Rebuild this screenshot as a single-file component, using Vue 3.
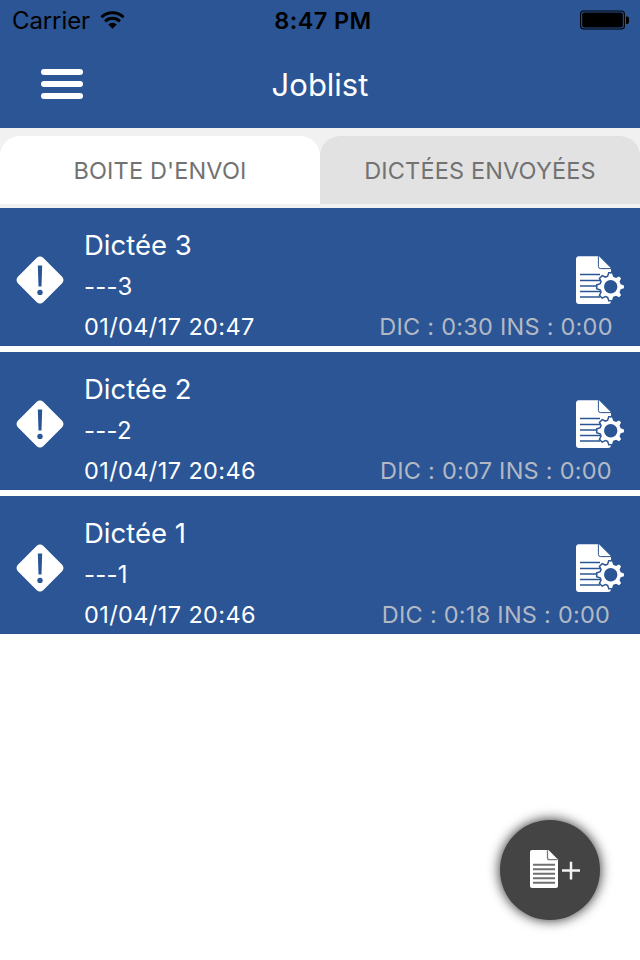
<script setup>
const jobs = [
  { title: 'Dictée 3', sub: '---3', date: '01/04/17 20:47', dic: '0:30', ins: '0:00' },
  { title: 'Dictée 2', sub: '---2', date: '01/04/17 20:46', dic: '0:07', ins: '0:00' },
  { title: 'Dictée 1', sub: '---1', date: '01/04/17 20:46', dic: '0:18', ins: '0:00' }
]

// Eight-toothed gear outline centred on (cx, cy)
function gear(cx, cy, root, tip, rootHalf, tipHalf) {
  const points = []
  for (let i = 0; i < 8; i++) {
    const steps = [[root, -rootHalf], [tip, -tipHalf], [tip, tipHalf], [root, rootHalf]]
    for (const [r, offset] of steps) {
      const a = ((i * 45 + offset) * Math.PI) / 180
      points.push(`${(cx + r * Math.cos(a)).toFixed(2)},${(cy + r * Math.sin(a)).toFixed(2)}`)
    }
  }
  return points.join(' ')
}
const gearPoints = gear(34.7, 30.8, 10.3, 13.3, 14, 6)
</script>

<template>
  <div class="screen">
    <header class="header">
      <div class="status">
        <div class="carrier">
          <span class="carrier-name">Carrier</span>
          <svg class="wifi" width="25" height="20" viewBox="0 0 26 20">
            <g fill="none" stroke="#000" stroke-width="3.1">
              <path d="M1.5 7.1a16.3 16.3 0 0 1 23 0" />
              <path d="M5.3 11.4a11 11 0 0 1 15.4 0" />
            </g>
            <path d="M8.6 14.7a6.3 6.3 0 0 1 8.8 0L13 19z" fill="#000" />
          </svg>
        </div>
        <span class="clock">8:47 PM</span>
        <svg class="battery" width="49" height="20" viewBox="0 0 49 20">
          <rect x=".6" y="1" width="43.8" height="18" rx="3" fill="none" stroke="#000" stroke-width="1.1" />
          <rect x="2.2" y="2.600" width="40.600" height="14.800" rx="1.6" fill="#000" />
          <path d="M46 6.500h1a2 2 0 0 1 2 2v3.400a2 2 0 0 1-2 2h-1z" fill="#000" />
        </svg>
      </div>
      <div class="navbar">
        <button class="menu" aria-label="Menu"><i></i><i></i><i></i></button>
        <h1 class="title">Joblist</h1>
      </div>
    </header>

    <nav class="tabs">
      <div class="tab active">BOITE D'ENVOI</div>
      <div class="tab">DICTÉES ENVOYÉES</div>
    </nav>

    <ul class="jobs">
      <li v-for="job in jobs" :key="job.title" class="job">
        <svg class="warn" width="48" height="48" viewBox="0 0 48 48">
          <rect x="6.100" y="6.100" width="35.800" height="35.800" rx="4.500" transform="rotate(45 24 24)" fill="#fff" />
          <path d="M21.800 9.600h4.400l-.7 20.800h-3z" fill="#2b5595" />
          <circle cx="24" cy="36.400" r="2.700" fill="#2b5595" />
        </svg>
        <div class="info">
          <div class="name">{{ job.title }}</div>
          <div class="sub">{{ job.sub }}</div>
          <div class="foot">
            <span class="date">{{ job.date }}</span>
            <span class="durations">DIC : {{ job.dic }} INS : {{ job.ins }}</span>
          </div>
        </div>
        <svg class="doc" width="50" height="50" viewBox="0 0 50 50">
          <path d="M3 .2H23L35 12.200V45a3 3 0 0 1-3 3H3a3 3 0 0 1-3-3V3.200a3 3 0 0 1 3-3z" fill="#fff" />
          <path d="M22.400.2V10.400a2.200 2.200 0 0 0 2.200 2.200H35" fill="none" stroke="#2b5595" stroke-width="1" />
          <path d="M4 18.500H24M4 24.500H24M4 30H24M4 35.500H24M4 41H24" stroke="#2b5595" stroke-width="1.400" />
          <polygon :points="gearPoints" fill="#2b5595" stroke="#2b5595" stroke-width="3" />
          <polygon :points="gearPoints" fill="#fff" />
          <circle cx="34.700" cy="30.800" r="6.700" fill="#2b5595" />
        </svg>
      </li>
    </ul>

    <button class="fab" aria-label="Nouvelle dictée">
      <svg width="52" height="40" viewBox="0 0 52 40">
        <path d="M2 0H18.500L28 9.500V36a2 2 0 0 1-2 2H2a2 2 0 0 1-2-2V2a2 2 0 0 1 2-2z" fill="#fff" />
        <path d="M17.500.3V7.700a2 2 0 0 0 2 2H27.500" fill="none" stroke="#777" stroke-width="1.300" />
        <path d="M3 14.800H25M3 19.300H25M3 23.800H25M3 28.300H25M3 32.800H25" stroke="#707070" stroke-width="1.900" />
        <path d="M32 20.500H50M41 11.800V29.500" stroke="#f2f2f2" stroke-width="2.500" />
      </svg>
    </button>
  </div>
</template>

<style>
body {
  margin: 0;
  background: #fff;
}
</style>

<style scoped>
.screen {
  position: relative;
  width: 640px;
  height: 960px;
  overflow: hidden;
  background: #fff;
  font-family: Inter, 'Liberation Sans', sans-serif;
}
.header {
  height: 128px;
  background: #2b5595;
  box-sizing: border-box;
}
.status {
  display: grid;
  grid-template-columns: 1fr auto 1fr;
  align-items: center;
  height: 40px;
  padding: 0 11px 0 12px;
  color: #000;
  font-size: 24px;
}
.carrier {
  display: flex;
  align-items: center;
  gap: 10px;
}
.carrier-name,
.clock {
  line-height: 38px;
  padding-top: 2px;
}
.carrier-name {
  letter-spacing: -.1px;
}
.clock {
  padding-left: 5px;
  font-size: 23.500px;
  font-weight: 600;
  letter-spacing: .4px;
}
.battery {
  justify-self: end;
}
.navbar {
  display: grid;
  grid-template-columns: 41px 60px 1fr 101px;
  align-items: center;
  height: 88px;
}
.menu {
  grid-column: 2;
  display: flex;
  flex-direction: column;
  gap: 6px;
  width: 42px;
  padding: 0;
  border: 0;
  background: none;
}
.menu i {
  height: 6px;
  border-radius: 3px;
  background: #fff;
}
.title {
  margin: 0;
  padding-top: 1px;
  color: #fff;
  font-size: 31px;
  font-weight: 370;
  line-height: 40px;
  text-align: center;
}
.tabs {
  display: flex;
  height: 80px;
  padding: 8px 0 4px;
  box-sizing: border-box;
  background: #f1f1f1;
}
.tab {
  flex: 1;
  border-radius: 20px 20px 0 0;
  background: #e2e2e2;
  color: #727272;
  font-size: 23.500px;
  font-weight: 370;
  letter-spacing: .15px;
  line-height: 70px;
  text-align: center;
}
.tab.active {
  background: #fff;
}
.jobs {
  display: flex;
  flex-direction: column;
  gap: 6px;
  margin: 0;
  padding: 0;
  list-style: none;
}
.job {
  display: grid;
  grid-template-columns: 48px 1fr 50px;
  height: 138px;
  padding: 0 14px 0 16px;
  box-sizing: border-box;
  background: #2b5595;
  color: #fff;
  font-weight: 370;
}
.warn,
.doc {
  margin-top: 48px;
}
.info {
  padding: 17px 0 0 20px;
}
.name {
  height: 41px;
  font-size: 27.500px;
  line-height: 41px;
}
.sub {
  height: 40px;
  font-size: 24px;
  letter-spacing: .2px;
  line-height: 42px;
}
.foot {
  display: flex;
  justify-content: space-between;
  margin-right: -48px;
  font-size: 23.500px;
  letter-spacing: .25px;
  line-height: 41px;
  white-space: nowrap;
}
.date {
  letter-spacing: .4px;
}
.durations {
  width: 256px;
  color: #b3b9c4;
  text-align: center;
}
.fab {
  position: absolute;
  left: 500px;
  top: 820px;
  display: flex;
  align-items: center;
  width: 100px;
  height: 100px;
  padding: 0 0 0 30px;
  border: 0;
  border-radius: 50%;
  background: #444;
  box-shadow: 0 0 12px 1px rgba(0, 0, 0, .75);
}
</style>
